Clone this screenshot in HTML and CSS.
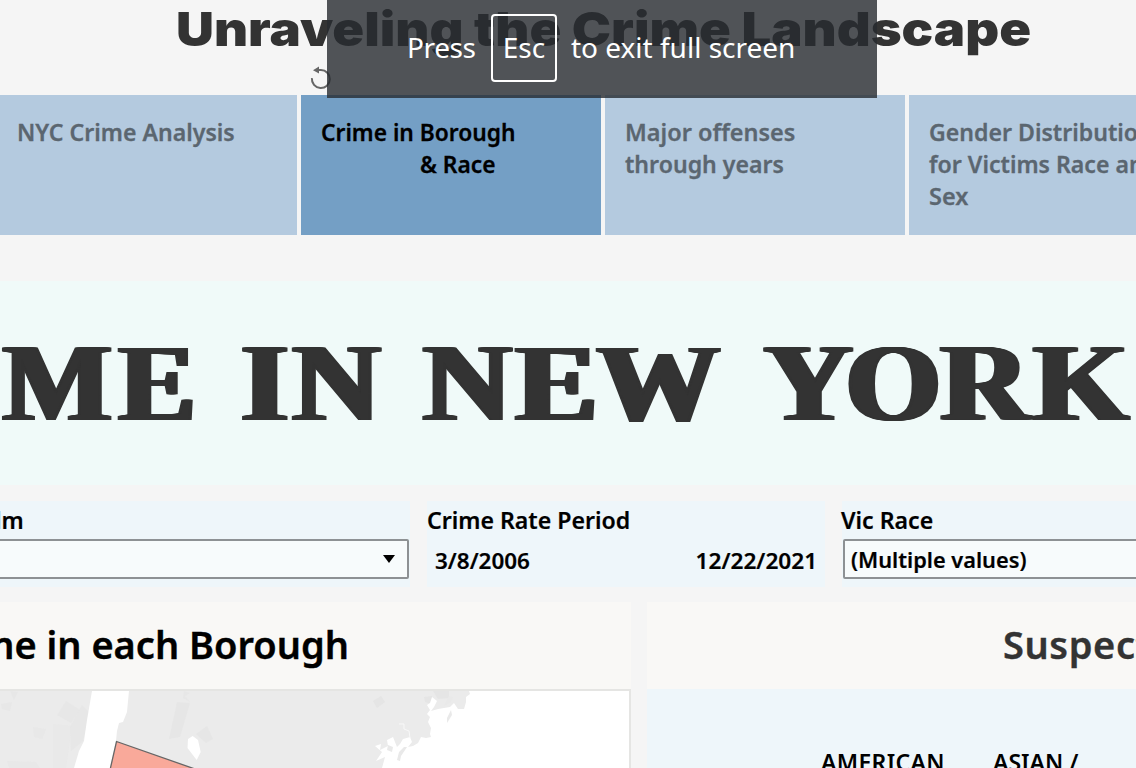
FILE: index.html
```html
<!DOCTYPE html>
<html lang="en">
<head>
<meta charset="utf-8">
<title>Unraveling the Crime Landscape</title>
<link rel="stylesheet" href="styles.css">
</head>
<body>
<div class="page">
  <header class="header">
    <h1 class="title">Unraveling the Crime Landscape</h1>
    <svg class="reset" width="24" height="26" viewBox="0 0 24 26">
      <path d="M2.9 13.2A9 9 0 1 0 11.9 5H7" fill="none" stroke="#666" stroke-width="2"/>
      <path d="M4 5.2 10 1.4V8.6Z" fill="#666"/>
    </svg>
  </header>

  <nav class="tabs">
    <div class="tab"><span class="line first">NYC Crime Analysis</span></div>
    <div class="tab active"><span class="line">Crime in Borough</span><span class="line indent">&amp; Race</span></div>
    <div class="tab"><span class="line wide">Major offenses</span><span class="line first">through years</span></div>
    <div class="tab"><span class="line first">Gender Distribution</span><span class="line first">for Victims Race and</span><span class="line wide">Sex</span></div>
  </nav>

  <section class="banner">
    <span class="word me">ME</span>
    <span class="word in">IN</span>
    <span class="word new">N<span class="tight">E</span>W</span>
    <span class="word york"><span class="tighter">Y</span><span class="tight">O</span>RK</span>
  </section>

  <section class="filters">
    <div class="filter">
      <div class="label clipped">lm</div>
      <div class="select first">
        <svg width="12" height="8" viewBox="0 0 12 8"><path d="M0 0H12L6 8Z"/></svg>
      </div>
    </div>
    <div class="filter">
      <div class="label">Crime Rate Period</div>
      <div class="dates"><span class="start">3/8/2006</span><span class="end">12/22/2021</span></div>
    </div>
    <div class="filter">
      <div class="label race">Vic Race</div>
      <div class="select last"><span>(Multiple values)</span></div>
    </div>
  </section>

  <main class="panels">
    <section class="panel">
      <h2 class="panel-title borough"><span>me in each Borough</span></h2>
      <div class="map">
        <svg width="629" height="77" viewBox="0 0 629 77">
          <rect width="629" height="77" fill="#ebebeb"/>
          <g fill="#e5e5e5">
            <path d="M66 10 80 19 71 32 57 24Z" opacity=".7"/>
            <path d="M53 33 72 35 66 77H53Z" opacity=".4"/>
            <path d="M82 14 90 22 83 50 71 60 70 36Z" opacity=".7"/>
            <path d="M1 13 12 11 10 20 2 18ZM10 0 18 1 14 9Z" opacity=".6"/>
            <path d="M177 11 190 12 180 46 169 48Z" opacity=".8"/>
            <path d="M184 0 190 2 185 5 190 11 183 7Z" opacity=".7"/>
            <path d="M196 43 207 35 213 48 206 52Z" opacity=".8"/>
            <path d="M7 70 36 71 40 77H9ZM33 36 46 38 42 48 34 46Z" opacity=".45"/>
            <path d="M373 10 381 5 385 11 377 17ZM424 6 432 5 432 13 425 11ZM433 0H449V7L438 8Z"/>
          </g>
          <path d="M92 0H129L127 21 123 31 119 32 117 40 116 50 110 77H74L79 60 84 50 87 29Z" fill="#fff"/>
          <path d="M192.700 45 188 48 187.500 57 196.700 69 200.700 61 198 49Z" fill="#fff"/>
          <path d="M469 0 470 3 466 6 466 11 464 18 458 18 454 12 450 16 438 18 431 20 434 16 437 10 432 6 430 12 427 14 430 19 427 23 430 26 428 31 431 37 430 43 431 46 426 47 421 46 418 52 413 55 408 56 412 51 410 46 403 48 400 53 397 56 393 46 387 49 388 55 380 59 381 53 375 55 382 61 376 70 385 66 382 77H629V0Z" fill="#fff"/>
          <path d="M451 19 452 24 447 32 447 27ZM404 56 407 56 401 65 400 70 397 69 399 61ZM388 54 393 56 392 61 387 59ZM444 15 449 5 453 6 451 11Z" fill="#e9e9e9"/>
          <path d="M399 33H404V38L409 40 410 47" fill="none" stroke="#f8f8f8"/>
          <path d="M110 79 116.500 50.500 195 78Z" fill="#f9a99a" stroke="#666" stroke-width="1.300"/>
        </svg>
      </div>
    </section>
    <section class="panel">
      <h2 class="panel-title suspect"><span>Suspect</span></h2>
      <div class="chart"><span class="col1">AMERICAN</span><span class="col2">ASIAN /</span></div>
    </section>
  </main>

  <div class="toast"><span class="press">Press</span><span class="key">Esc</span><span>to exit full screen</span></div>
</div>
</body>
</html>
```
FILE: styles.css
```css
* { box-sizing: border-box; }

body {
  margin: 0;
  background: #f5f5f5;
  color: #000;
  font-family: "Noto Sans", "Open Sans", sans-serif;
}

.page {
  position: relative;
  width: 1136px;
  height: 768px;
  overflow: hidden;
  font-weight: 600;
}

.header { height: 95px; padding-left: 176px; }

.title {
  margin: 0;
  height: 58px;
  font: 900 47px/58px Inter, sans-serif;
  color: #333;
  white-space: nowrap;
  transform: scaleX(1.119);
  transform-origin: left;
}

.reset { display: block; margin: 7px 0 0 132.500px; }

/* Story navigation */
.tabs {
  display: grid;
  grid-template-columns: repeat(4, 300px);
  gap: 4px;
  width: 1212px;
  height: 140px;
  margin-left: -3px;
}

.tab {
  padding: 21px 0 0 20px;
  background: #b4cadf;
  color: #5b6670;
  font-size: 24px;
  line-height: 32px;
  -webkit-text-stroke: .3px;
}

.tab.active { background: #749fc5; color: #000; }

.line {
  display: block;
  white-space: nowrap;
  transform: scaleX(.948);
  transform-origin: left;
}

.line.first { transform: scaleX(.962); }
.line.wide { transform: scaleX(.978); }
.line.indent { margin-left: 99px; }

/* Headline */
.banner {
  display: grid;
  grid-template-columns: 238px 182px 341px 375px;
  height: 204px;
  margin-top: 46px;
  background: #f0faf9;
  color: #333;
  font: 700 111px/204px "Liberation Serif", serif;
}

.word {
  justify-self: start;
  padding-left: 3px;
  text-shadow: 1px 0, 2px 0, 3px 0, -1px 0, -2px 0, -3px 0;
  letter-spacing: 4px;
  transform-origin: left;
}

.word.me { transform: scaleX(1.035); letter-spacing: 7px; }
.word.in { transform: scaleX(1.09); }
.word.new { transform: scaleX(1.1); }
.word.york { transform: scaleX(1.1); }
.tight { letter-spacing: 0; }
.tighter { letter-spacing: -6px; }

/* Filters */
.filters {
  display: grid;
  grid-template-columns: 410px 398px 295px;
  column-gap: 17px;
  height: 86px;
  margin-top: 16px;
}

.filter { background: #eef6fa; }

.label {
  height: 38px;
  font-size: 23.500px;
  line-height: 38px;
  white-space: nowrap;
  transform: scaleX(.983);
  transform-origin: left;
  -webkit-text-stroke: .2px;
}

.label.clipped { margin-left: -5px; }
.label.race { margin-left: -1px; }

.select {
  display: flex;
  align-items: center;
  height: 40px;
  border: 2px solid #8d9194;
  background: #f7fbfc;
  border-radius: 2px;
  font-size: 22px;
  -webkit-text-stroke: .2px;
}

.select.first {
  justify-content: flex-end;
  width: 411px;
  margin-left: -2px;
  padding-right: 12px;
}

.select.last { width: 320px; margin-left: 1px; padding-left: 6px; }
.select.last span { transform: scaleX(.988); transform-origin: left; }

.dates {
  display: flex;
  justify-content: space-between;
  padding: 0 8px;
  font-size: 22px;
  line-height: 42px;
  -webkit-text-stroke: .2px;
}

.dates .start { transform: scaleX(1.020); transform-origin: left; }
.dates .end { transform: scaleX(1.030); transform-origin: right; }

/* Worksheets */
.panels {
  display: grid;
  grid-template-columns: 631px 489px;
  column-gap: 16px;
  margin-top: 15px;
}

.panel-title {
  display: flex;
  height: 87px;
  margin: 0;
  background: #f9f8f6;
  font-size: 38px;
  font-weight: 600;
  line-height: 84px;
  white-space: nowrap;
  -webkit-text-stroke: .4px;
}

.borough { justify-content: flex-end; padding-right: 282px; }
.suspect { padding-left: 356px; color: #333; overflow: hidden; letter-spacing: .6px; }

.map {
  height: 79px;
  border: solid #e5e5e3;
  border-width: 2px 2px 0 0;
}

.map svg { display: block; }

.chart {
  display: grid;
  grid-template-columns: 172px 1fr;
  height: 79px;
  padding: 57px 0 0 174px;
  background: #eef6fa;
  font-size: 23px;
  line-height: 32px;
}

.col1 { letter-spacing: .3px; }

/* Full-screen hint */
.toast {
  position: absolute;
  top: 0;
  left: 327px;
  display: flex;
  align-items: center;
  width: 550px;
  height: 98px;
  padding: 0 0 2px 80px;
  background: rgba(39, 42, 48, .8);
  color: #fff;
  font-size: 28px;
  font-weight: 400;
  white-space: nowrap;
}

.toast > span:not(.key) { padding-bottom: 2px; }

.press { width: 84px; letter-spacing: -.4px; }

.key {
  width: 66px;
  height: 68px;
  margin-right: 14px;
  border: 2px solid #fff;
  border-radius: 4px;
  line-height: 63px;
  text-align: center;
}
```
